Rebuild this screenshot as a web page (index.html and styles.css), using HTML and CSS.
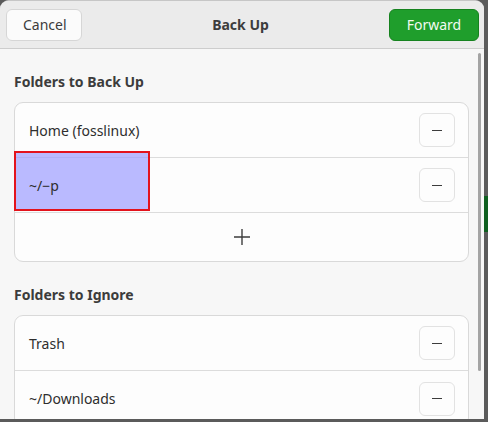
FILE: index.html
```html
<!DOCTYPE html>
<html>
<head>
<meta charset="utf-8">
<link rel="stylesheet" href="styles.css">
</head>
<body>
<div class="desk-green"></div>
<div class="window">
  <header class="headerbar">
    <button class="btn">Cancel</button>
    <div class="title">Back Up</div>
    <button class="btn btn-green">Forward</button>
  </header>
  <main class="content">
    <h2 class="section-title">Folders to Back Up</h2>
    <div class="card">
      <div class="row"><span class="label">Home (fosslinux)</span><button class="rm"><span class="minus"></span></button></div>
      <div class="row highlight-row"><span class="label">~/−p</span><button class="rm"><span class="minus"></span></button>
        <div class="annot"></div>
      </div>
      <div class="row add-row">
        <svg width="18" height="18" viewBox="0 0 18 18"><path d="M9 1v16M1 9h16" stroke="#3d3d3d" stroke-width="1.4" fill="none"/></svg>
      </div>
    </div>
    <h2 class="section-title">Folders to Ignore</h2>
    <div class="card">
      <div class="row"><span class="label">Trash</span><button class="rm"><span class="minus"></span></button></div>
      <div class="row"><span class="label">~/Downloads</span><button class="rm"><span class="minus"></span></button></div>
    </div>
  </main>
  <div class="scrollbar"></div>
</div>
</body>
</html>
```
FILE: styles.css
```css
* { box-sizing: border-box; }
html, body { margin: 0; padding: 0; }
body {
  width: 488px;
  height: 422px;
  background: #5b5b5b;
  font-family: "Noto Sans", "DejaVu Sans", sans-serif;
  position: relative;
  overflow: hidden;
}
.desk-green {
  position: absolute;
  left: 484px;
  top: 196px;
  width: 4px;
  height: 36px;
  background: #0e5f1f;
}
.window {
  position: relative;
  width: 484px;
  height: 419px;
  background: #f7f7f7;
  border-radius: 9px 9px 0 0;
  overflow: hidden;
  border-top: 1px solid #c6c6c6;
}
.headerbar {
  height: 48px;
  background: #ebebeb;
  border-bottom: 1px solid #cdcdcd;
  display: flex;
  align-items: center;
  justify-content: space-between;
  padding: 0 5px 0 6px;
}
.btn {
  height: 32px;
  padding: 0 16px;
  font: 14px "Noto Sans", sans-serif;
  color: #3c3c3c;
  background: #fbfbfb;
  border: 1px solid #d6d6d6;
  border-radius: 6px;
  width: 76px;
}
.btn-green {
  width: 90px;
  background: #1f9e2c;
  border-color: #16821f;
  color: #f2fbf2;
}
.title {
  font-weight: bold;
  font-size: 14px;
  color: #3c3c3c;
  padding-left: 10px;
}
.content {
  padding: 0 15px 0 14px;
}
.section-title {
  margin: 0;
  padding: 23px 0 10px;
  font-size: 14px;
  font-weight: bold;
  color: #3c3c3c;
  line-height: 20px;
}
.card {
  background: #fdfdfd;
  border: 1px solid #d9d9d9;
  border-radius: 9px;
}
.row {
  position: relative;
  height: 55px;
  display: flex;
  align-items: center;
  justify-content: space-between;
  padding: 0 13px 0 14px;
  border-bottom: 1px solid #dcdcdc;
}
.row:last-child { border-bottom: none; }
.label {
  font-size: 14px;
  color: #2e2e2e;
}
.rm {
  width: 36px;
  height: 34px;
  border: 1px solid #e2e2e2;
  border-radius: 6px;
  background: #fdfdfd;
  display: flex;
  align-items: center;
  justify-content: center;
  padding: 0;
}
.minus {
  display: block;
  width: 10px;
  height: 1px;
  background: #3c3c3c;
}
.add-row {
  height: 48px;
  justify-content: center;
}
.annot {
  position: absolute;
  left: -1px;
  top: -7px;
  width: 136px;
  height: 60px;
  border: 2px solid #e3131c;
  background: rgba(160, 160, 255, 0.72);
  z-index: 0;
}
.highlight-row .label { position: relative; z-index: 1; }
.scrollbar {
  position: absolute;
  left: 478px;
  top: 52px;
  width: 3px;
  height: 318px;
  background: #a4a4a4;
  border-radius: 2px;
}
```
